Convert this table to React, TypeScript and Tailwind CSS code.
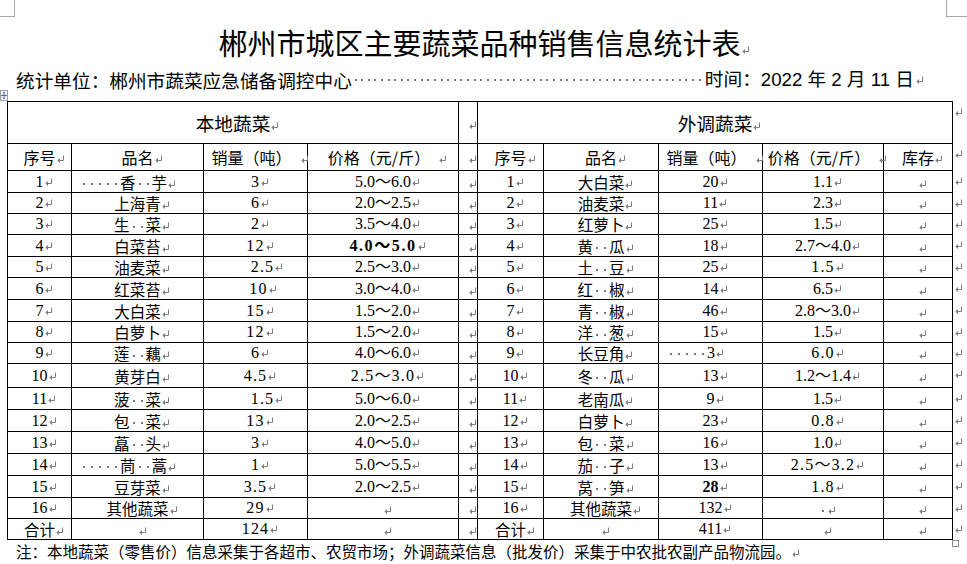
import React from "react";

type Cell = { t: string; f?: "c" | "t" | "m" | "mb" | "tb"; l?: boolean; cls?: string };

const fonts = {
  c: "font-['Noto_Sans_CJK_SC',sans-serif] text-[15.5px]",
  t: "font-['Liberation_Serif','Noto_Sans_CJK_SC',serif] text-[16px]",
  tb: "font-['Liberation_Serif','Noto_Sans_CJK_SC',serif] text-[16px] font-bold",
  m: "font-['Liberation_Serif','Noto_Sans_CJK_SC',serif] text-[16px] tracking-[1.2px]",
  mb: "font-['Liberation_Serif','Noto_Sans_CJK_SC',serif] text-[16px] font-bold tracking-[1.6px]",
};

// Word 段落标记 ↵，不参与居中
function Mark({ bare }: { bare?: boolean }) {
  return (
    <svg
      width="8"
      height="8"
      viewBox="0 0 8 8"
      className={bare ? "block" : "inline-block align-[1px] ml-[1px] -mr-[9px]"}
    >
      <path d="M6.5 0.5V5.5H2.5" fill="none" stroke="#7f7f7f" strokeWidth="1" />
      <path d="M0.3 5.5L3 2.9V8.1Z" fill="#7f7f7f" />
    </svg>
  );
}

// 空格标记（灰色小点）
function Dots({ n }: { n: number }) {
  return (
    <span
      className="inline-block h-[2px] align-middle bg-[repeating-linear-gradient(90deg,transparent_0_3px,#7a7a7a_3px_5px,transparent_5px_8px)]"
      style={{ width: n * 8 }}
    />
  );
}

function Txt({ s }: { s: string }) {
  return (
    <>
      {s.split(/(·+)/).map((p, i) =>
        p.startsWith("·") ? <Dots key={i} n={p.length} /> : p ? <span key={i}>{p}</span> : null
      )}
    </>
  );
}

function Td({ v }: { v: Cell }) {
  return (
    <td
      className={`border border-black p-0 whitespace-nowrap align-middle ${
        v.l ? "text-left pl-[8px]" : "text-center"
      } ${fonts[v.f ?? "c"]} ${v.cls ?? ""}`}
    >
      <Txt s={v.t} />
      <Mark />
    </td>
  );
}

const t = (s: string, cls?: string): Cell => ({ t: s, f: "t", cls });
const c = (s: string, l?: boolean): Cell => ({ t: s, f: "c", l });
const m = (s: string, cls?: string): Cell => ({ t: s, f: "m", cls });
const e: Cell = { t: "" };

const rows: { h: string; cells: Cell[] }[] = [
  { h: "h-[22px]", cells: [t("1"), c("·····香··芋", true), m("3"), t("5.0～6.0"), t("1"), c("大白菜"), t("20"), t("1.1")] },
  { h: "h-[21px]", cells: [t("2"), c("上海青"), m("6"), t("2.0～2.5"), t("2"), c("油麦菜"), t("11"), t("2.3")] },
  { h: "h-[21px]", cells: [t("3"), c("生··菜"), m("2"), t("3.5～4.0"), t("3"), c("红萝卜"), t("25"), t("1.5")] },
  { h: "h-[22px]", cells: [t("4"), c("白菜苔"), m("12"), { t: "4.0～5.0", f: "mb" }, t("4"), c("黄··瓜"), t("18"), t("2.7～4.0")] },
  { h: "h-[21px]", cells: [t("5"), c("油麦菜"), m("2.5", "pl-[14px]"), t("2.5～3.0"), t("5"), c("土··豆"), t("25"), m("1.5")] },
  { h: "h-[22px]", cells: [t("6"), c("红菜苔"), m("10", "pl-[6px]"), t("3.0～4.0"), t("6"), c("红··椒"), t("14"), t("6.5")] },
  { h: "h-[22px]", cells: [t("7"), c("大白菜"), m("15"), t("1.5～2.0"), t("7"), c("青··椒"), t("46"), t("2.8～3.0")] },
  { h: "h-[21px]", cells: [t("8"), c("白萝卜"), m("12"), t("1.5～2.0"), t("8"), c("洋··葱"), t("15"), t("1.5")] },
  { h: "h-[21px]", cells: [t("9"), c("莲··藕"), m("6"), t("4.0～6.0"), t("9"), c("长豆角"), { t: "·····3", f: "t", l: true }, m("6.0")] },
  { h: "h-[24px]", cells: [t("10"), c("黄芽白"), m("4.5"), m("2.5～3.0"), t("10"), c("冬··瓜"), t("13"), t("1.2～1.4")] },
  { h: "h-[22px]", cells: [t("11"), c("菠··菜"), m("1.5", "pl-[14px]"), t("5.0～6.0"), t("11"), c("老南瓜"), t("9"), t("1.5")] },
  { h: "h-[22px]", cells: [t("12"), c("包··菜"), m("13"), t("2.0～2.5"), t("12"), c("白萝卜"), t("23"), m("0.8")] },
  { h: "h-[22px]", cells: [t("13"), c("藠··头"), m("3"), t("4.0～5.0"), t("13"), c("包··菜"), t("16"), t("1.0")] },
  { h: "h-[22px]", cells: [t("14"), c("·····茼··蒿", true), m("1"), t("5.0～5.5"), t("14"), c("茄··子"), t("13"), m("2.5～3.2")] },
  { h: "h-[22px]", cells: [t("15"), c("豆芽菜"), m("3.5"), t("2.0～2.5"), t("15"), c("莴··笋"), { t: "28", f: "tb" }, m("1.8")] },
  { h: "h-[21px]", cells: [t("16"), c("其他蔬菜"), m("29"), e, t("16"), c("其他蔬菜"), t("132"), c("·")] },
  { h: "h-[21px]", cells: [c("合计"), e, m("124"), e, c("合计"), e, t("411"), e] },
];

function EndMark() {
  return (
    <td className="p-0 pl-[2px] align-top">
      <div className="h-[21px] flex items-center">
        <Mark bare />
      </div>
    </td>
  );
}

function Gap() {
  return (
    <td className="border border-black p-0 text-center align-middle">
      <Mark />
    </td>
  );
}

function Head({ s, sp }: { s: string; sp?: boolean }) {
  return (
    <td className="border border-black p-0 text-center align-middle whitespace-nowrap text-[16px]">
      {s}
      {sp && <span className="inline-block w-[8px]" />}
      <Mark />
    </td>
  );
}

export default function App() {
  return (
    <div className="relative w-[967px] h-[564px] overflow-hidden bg-white text-black font-['Noto_Sans_CJK_SC',sans-serif]">
      {/* 页边角标记 */}
      <div className="absolute left-0 top-0 w-[15px] h-[17px] border-r border-b border-[#a6a6a6]" />
      <div className="absolute left-[946px] top-0 w-[21px] h-[17px] border-l border-b border-[#a6a6a6]" />

      {/* 表格移动手柄 */}
      <svg width="8" height="11" viewBox="0 0 8 11" className="absolute left-0 top-[90px]">
        <rect x="0.5" y="0.5" width="7" height="10" fill="white" stroke="#a0a0a0" />
        <path d="M4 2V9M1.5 5.5H6.5" stroke="#3c6fb5" strokeWidth="1" />
        <path d="M4 1.5L2.8 3H5.2Z M4 9.5L2.8 8H5.2Z M1 5.5L2.5 4.3V6.7Z M7 5.5L5.5 4.3V6.7Z" fill="#3c6fb5" />
      </svg>

      <div className="ml-[7px] w-[945px] pt-[24px] h-[60px] text-center text-[29px] leading-[36px] whitespace-nowrap">
        郴州市城区主要蔬菜品种销售信息统计表
        <Mark />
      </div>

      <div className="mt-[8px] h-[24px] flex items-center pl-[16px] text-[18.67px] leading-[24px] whitespace-nowrap">
        <span>统计单位：郴州市蔬菜应急储备调控中心</span>
        <span className="inline-block h-[2px] w-[351px] bg-[repeating-linear-gradient(90deg,transparent_0_2.5px,#7a7a7a_2.5px_4.5px,transparent_4.5px_6.62px)]" />
        <span className="font-['Liberation_Sans','Noto_Sans_CJK_SC',sans-serif] ml-[2px]">时间：2022 年 2 月 11 日</span>
        <span className="ml-[2px] flex items-center">
          <Mark bare />
        </span>
      </div>

      <div className="mt-[9px] ml-[7px]">
        <table className="border-collapse table-fixed w-[960px] leading-[18px]">
          <colgroup>
            <col className="w-[64px]" />
            <col className="w-[132px]" />
            <col className="w-[104px]" />
            <col className="w-[151px]" />
            <col className="w-[19px]" />
            <col className="w-[66px]" />
            <col className="w-[115px]" />
            <col className="w-[104px]" />
            <col className="w-[121px]" />
            <col className="w-[69px]" />
            <col className="w-[15px]" />
          </colgroup>
          <tbody>
            <tr className="h-[42px]">
              <td colSpan={4} className="border border-black p-0 text-center align-middle text-[18.67px]">
                本地蔬菜
                <Mark />
              </td>
              <Gap />
              <td colSpan={5} className="border border-black p-0 text-center align-middle text-[18.67px]">
                外调蔬菜
                <Mark />
              </td>
              <EndMark />
            </tr>
            <tr className="h-[27px]">
              <Head s="序号" />
              <Head s="品名" />
              <Head s="销量（吨）" sp />
              <Head s="价格（元/斤）" sp />
              <Gap />
              <Head s="序号" />
              <Head s="品名" />
              <Head s="销量（吨）" sp />
              <Head s="价格（元/斤）" sp />
              <Head s="库存" />
              <EndMark />
            </tr>
            {rows.map((r, i) => (
              <tr key={i} className={r.h}>
                {r.cells.slice(0, 4).map((v, j) => (
                  <Td key={j} v={v} />
                ))}
                <Gap />
                {r.cells.slice(4).map((v, j) => (
                  <Td key={j + 4} v={v} />
                ))}
                <Td v={e} />
                <EndMark />
              </tr>
            ))}
          </tbody>
        </table>
      </div>

      <div className="pl-[16px] h-[24px] leading-[22px] text-[15.5px] whitespace-nowrap">
        注：本地蔬菜（零售价）信息采集于各超市、农贸市场；外调蔬菜信息（批发价）采集于中农批农副产品物流园。
        <Mark />
      </div>

      {/* 表格尺寸手柄 */}
      <div className="absolute left-[952px] top-[540px] w-[7px] h-[7px] border border-[#8c8c8c] bg-white" />
    </div>
  );
}
